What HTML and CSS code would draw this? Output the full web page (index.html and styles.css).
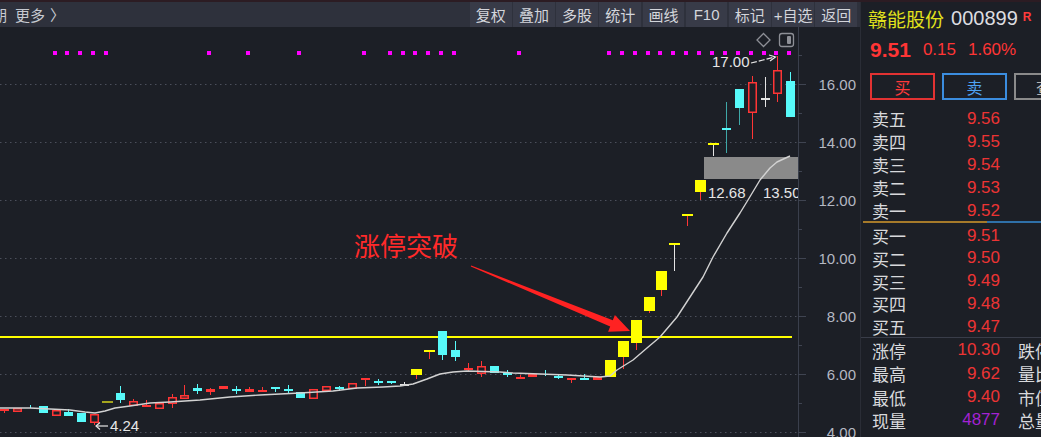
FILE: index.html
```html
<!DOCTYPE html>
<html lang="zh-CN">
<head>
<meta charset="utf-8">
<title>赣能股份 000899</title>
<link rel="stylesheet" href="styles.css">
</head>
<body>
<div class="app">
  <div class="main">
    <div class="toolbar">
      <div class="crumbs"><span class="cut">期</span><span>更多</span><span class="chev">〉</span></div>
      <div class="tools">
        <span class="tool">复权</span><span class="tool">叠加</span><span class="tool">多股</span><span class="tool">统计</span><span class="tool">画线</span><span class="tool">F10</span><span class="tool">标记</span><span class="tool">+自选</span><span class="tool">返回</span>
      </div>
    </div>
    <div class="chart">
      <svg class="plot" width="860" height="410" viewBox="0 27 860 410" xmlns="http://www.w3.org/2000/svg">
        <defs><clipPath id="pc"><rect x="0" y="27" width="798" height="410"/></clipPath></defs>
        <g class="grid">
          <line x1="0" x2="797" y1="84.5" y2="84.5"/>
          <line x1="0" x2="797" y1="142.5" y2="142.5"/>
          <line x1="0" x2="797" y1="200.5" y2="200.5"/>
          <line x1="0" x2="797" y1="258.5" y2="258.5"/>
          <line x1="0" x2="797" y1="316.5" y2="316.5"/>
          <line x1="0" x2="797" y1="374.5" y2="374.5"/>
          <line x1="0" x2="797" y1="432.5" y2="432.5"/>
        </g>
        <g class="axis">
          <line class="ax-line" x1="798.5" x2="798.5" y1="27" y2="437"/>
          <line class="tick" x1="798" x2="806" y1="84.5" y2="84.5"/>
          <line class="tick" x1="798" x2="806" y1="142.5" y2="142.5"/>
          <line class="tick" x1="798" x2="806" y1="200.5" y2="200.5"/>
          <line class="tick" x1="798" x2="806" y1="258.5" y2="258.5"/>
          <line class="tick" x1="798" x2="806" y1="316.5" y2="316.5"/>
          <line class="tick" x1="798" x2="806" y1="374.5" y2="374.5"/>
          <line class="tick" x1="798" x2="806" y1="432.5" y2="432.5"/>
          <line class="tick" x1="798" x2="802" y1="55.5" y2="55.5"/>
          <line class="tick" x1="798" x2="802" y1="113.5" y2="113.5"/>
          <line class="tick" x1="798" x2="802" y1="171.5" y2="171.5"/>
          <line class="tick" x1="798" x2="802" y1="229.5" y2="229.5"/>
          <line class="tick" x1="798" x2="802" y1="287.5" y2="287.5"/>
          <line class="tick" x1="798" x2="802" y1="345.5" y2="345.5"/>
          <line class="tick" x1="798" x2="802" y1="403.5" y2="403.5"/>
          <text class="ax-label" x="856" y="90">16.00</text>
          <text class="ax-label" x="856" y="148">14.00</text>
          <text class="ax-label" x="856" y="206">12.00</text>
          <text class="ax-label" x="856" y="264">10.00</text>
          <text class="ax-label" x="856" y="322">8.00</text>
          <text class="ax-label" x="856" y="380">6.00</text>
          <text class="ax-label" x="856" y="438">4.00</text>
        </g>
        <g class="icons">
          <path class="ic" d="M763.5 33.5 L770 40 L763.5 46.5 L757 40 Z"/>
          <rect class="ic" x="779.5" y="33.5" width="14" height="13" rx="2.5"/>
          <rect class="ic-fill" x="787" y="36" width="4" height="8" rx="1"/>
        </g>
        <g clip-path="url(#pc)">
          <g id="dots"></g>
          <rect class="zone" x="704" y="157" width="94" height="22"/>
          <rect class="limit-line" x="0" y="336" width="792" height="2"/>
          <g id="candles"></g>
          <polyline class="ma" points="0,408 30,408 50,409 70,410 85,412 95,413 105,411 115,408 130,406 150,403 170,402 200,400 230,397 260,395 300,393 333,391 357,388 383,387 400,386 413,384 427,379 440,374 453,372 467,371 500,372 513,373 567,375 600,377 610,376 617,370 633,360 647,348 660,337 677,317 690,297 703,277 713,257 727,233 740,213 748,200 760,180 770,168 777,162 790,156"/>
          <text class="mark" x="712" y="67">17.00</text>
          <line class="mark-arrow dashed" x1="751" y1="63" x2="775" y2="57"/>
          <polyline class="mark-arrow" points="769,55 775.5,57 770,61"/>
          <text class="mark" x="110" y="431">4.24</text>
          <line class="mark-arrow" x1="96" y1="426" x2="108" y2="426"/>
          <polyline class="mark-arrow" points="100,422.5 96,426 100,429.5"/>
          <text class="mark" x="708" y="198">12.68</text>
          <text class="mark" x="763" y="198">13.50</text>
          <text class="note" x="354" y="256">涨停突破</text>
          <polygon class="note-arrow" points="471.2,265.5 612.8,320.2 614.9,315.1 630,331 608.1,331.7 610.2,326.6 470.8,266.5"/>
        </g>
      </svg>
    </div>
  </div>
  <aside class="quote">
    <div class="q-head"><span class="q-name">赣能股份</span><span class="q-code">000899</span><span class="q-r">R</span></div>
    <div class="q-price"><span class="q-last">9.51</span><span>0.15</span><span>1.60%</span></div>
    <div class="q-btns"><span class="q-btn buy">买</span><span class="q-btn sell">卖</span><span class="q-btn more">查</span></div>
    <div class="book asks">
      <div class="row"><span class="lbl">卖五</span><span class="val">9.56</span></div>
      <div class="row"><span class="lbl">卖四</span><span class="val">9.55</span></div>
      <div class="row"><span class="lbl">卖三</span><span class="val">9.54</span></div>
      <div class="row"><span class="lbl">卖二</span><span class="val">9.53</span></div>
      <div class="row"><span class="lbl">卖一</span><span class="val">9.52</span></div>
    </div>
    <div class="split"></div>
    <div class="book bids">
      <div class="row"><span class="lbl">买一</span><span class="val">9.51</span></div>
      <div class="row"><span class="lbl">买二</span><span class="val">9.50</span></div>
      <div class="row"><span class="lbl">买三</span><span class="val">9.49</span></div>
      <div class="row"><span class="lbl">买四</span><span class="val">9.48</span></div>
      <div class="row"><span class="lbl">买五</span><span class="val">9.47</span></div>
    </div>
    <div class="book stats">
      <div class="row"><span class="lbl">涨停</span><span class="val">10.30</span><span class="lbl2">跌停</span></div>
      <div class="row"><span class="lbl">最高</span><span class="val">9.62</span><span class="lbl2">量比</span></div>
      <div class="row"><span class="lbl">最低</span><span class="val">9.40</span><span class="lbl2">市值</span></div>
      <div class="row"><span class="lbl">现量</span><span class="val vol">4877</span><span class="lbl2">总量</span></div>
    </div>
  </aside>
</div>
<script src="script.js"></script>
</body>
</html>
```

FILE: styles.css
```css
* { box-sizing: border-box; }
html, body { margin: 0; padding: 0; }
body {
  width: 1041px;
  height: 437px;
  overflow: hidden;
  background: #1c1f26;
  font-family: "Liberation Sans", "Noto Sans CJK SC", sans-serif;
}
.app {
  display: flex;
  height: 437px;
  border-top: 2px solid #2c1c23;
}
.main {
  width: 860px;
  flex: none;
  display: flex;
  flex-direction: column;
}
.toolbar {
  height: 25px;
  flex: none;
  background: #2e313c;
  display: flex;
  justify-content: space-between;
  align-items: stretch;
  overflow: hidden;
}
.crumbs {
  display: flex;
  align-items: center;
  gap: 8px;
  color: #c6c9d1;
  font-size: 15px;
  white-space: nowrap;
}
.crumbs .cut { margin-left: -8px; }
.crumbs .chev { margin-left: -3px; }
.tools {
  display: flex;
  gap: 1.6px;
  padding-right: 3px;
}
.tool {
  width: 41.6px;
  background: #383b48;
  color: #d3d5db;
  font-size: 15px;
  display: flex;
  align-items: center;
  justify-content: center;
  white-space: nowrap;
}
.chart { height: 410px; }
.plot { display: block; }
.grid line { stroke: #4b4f5b; stroke-width: 1; stroke-dasharray: 1.5 3.5; }
.ax-line { stroke: #3a3f4c; stroke-width: 1; }
.tick { stroke: #3f4451; stroke-width: 1; }
.ax-label { font: 15px "Liberation Sans", sans-serif; fill: #b4b8c3; text-anchor: end; }
.ic { fill: none; stroke: #8d8f96; stroke-width: 1.3; }
.ic-fill { fill: #8d8f96; }
.zone { fill: #8a8a8a; }
.limit-line { fill: #ffff00; }
.ma { fill: none; stroke: #d2d2d2; stroke-width: 1.4; stroke-linejoin: round; }
.mark { font: 15px "Liberation Sans", sans-serif; fill: #e6e6e6; }
.mark-arrow { fill: none; stroke: #e6e6e6; stroke-width: 1.2; }
.mark-arrow.dashed { stroke-dasharray: 6 2; }
.note { font: 26px "Noto Sans CJK SC", sans-serif; fill: #ff2a2a; }
.note-arrow { fill: #ff2222; }

.quote {
  width: 181px;
  flex: none;
  border-left: 1px solid #2a2d36;
  overflow: hidden;
  color: #d6d6d6;
}
.q-head {
  height: 33px;
  display: flex;
  align-items: center;
  gap: 7px;
  padding-left: 7px;
  white-space: nowrap;
}
.q-name { color: #e2e21c; font-size: 19px; }
.q-code { color: #dcdde0; font-size: 20px; }
.q-r {
  color: #ff3b3b;
  font-size: 12px;
  font-weight: bold;
  align-self: flex-start;
  margin-top: 8px;
  margin-left: -2px;
}
.q-price {
  height: 30px;
  display: flex;
  align-items: center;
  gap: 12px;
  padding-left: 9px;
  color: #ff3535;
  font-size: 17px;
  white-space: nowrap;
}
.q-last { font-size: 21px; font-weight: bold; }
.q-btns {
  margin-top: 8px;
  height: 27px;
  display: flex;
  gap: 7px;
  padding-left: 9px;
}
.q-btn {
  flex: none;
  width: 65px;
  border: 2px solid;
  display: flex;
  align-items: center;
  justify-content: center;
  font-size: 16px;
  font-family: "Noto Sans CJK SC", sans-serif;
}
.buy { border-color: #e23232; color: #ff3a3a; }
.sell { border-color: #3b8ddf; color: #4ea2f2; }
.more { border-color: #8a8a8a; color: #b4b4b4; justify-content: flex-start; padding-left: 20px; }
.asks { margin-top: 6px; }
.row {
  display: grid;
  grid-template-columns: 60px 68px auto;
  align-items: center;
  padding-left: 11px;
  white-space: nowrap;
}
.asks .row { height: 23px; }
.bids .row { height: 22.8px; }
.stats .row { height: 23.3px; }
.bids { border-bottom: 1px solid #393d49; }
.lbl, .lbl2 { font-size: 17px; color: #d8d9dc; font-family: "Noto Sans CJK SC", sans-serif; }
.lbl2 { margin-left: 18px; }
.val { font-size: 17px; color: #ec3434; text-align: right; }
.val.vol { color: #a322d2; }
.split {
  height: 2px;
  margin-left: 2px;
  background: linear-gradient(to right, #a67a2a 0, #a67a2a 124px, #2f70a8 124px, #2f70a8 100%);
}
```

FILE: script.js
```js
(function () {
  var NS = 'http://www.w3.org/2000/svg';
  var COL = { r: '#ff3535', c: '#57fafa', y: '#ffff00', w: '#e4e4e4', o: '#a5a51e', t: '#3fa8a8' };
  var BG = '#1c1f26';
  function X(i) { return Math.round(4 + 12.89 * i); }
  // [index, color, filled/hollow, bodyTop, bodyBottom, wickTop, wickBottom, wickColor, width]
  var data = [
    [0,'r','f',409,411,409,413],
    [1,'r','h',408,412],
    [2,'c','f',407,408,405,408,null,1],
    [3,'c','f',406,413],
    [4,'r','h',410,416],
    [5,'c','f',412,416,409],
    [6,'c','f',413,422],
    [7,'r','h',414,423,414,425],
    [8,'o','f',401,403,null,null,null,11],
    [9,'c','f',393,400,386,403],
    [10,'r','h',401,406,399],
    [11,'r','f',405,407,400],
    [12,'r','h',403,409],
    [13,'r','h',397,404,394,408],
    [14,'r','h',395,399,385],
    [15,'c','f',388,391,384,394],
    [16,'r','f',389,392,388,395],
    [17,'r','h',386,389],
    [18,'c','f',389,391,386,394],
    [19,'r','h',389,392,387],
    [20,'r','f',390,392,387],
    [21,'c','f',387,389,387,392],
    [22,'c','f',389,391,385,393],
    [23,'c','f',392,398],
    [24,'r','h',389,399],
    [25,'r','h',386,391],
    [26,'c','f',387,389,386,391],
    [27,'r','h',383,389],
    [28,'r','f',378,380,378,386],
    [29,'c','f',381,383,379,385],
    [30,'c','f',381,383,381,384],
    [31,'w','f',384,386,382,386],
    [32,'y','f',369,375,369,379,'r'],
    [33,'y','f',350,352,350,359,'r'],
    [34,'c','f',331,355,331,360],
    [35,'c','f',350,357,341,361],
    [36,'r','f',368,370,363,372],
    [37,'r','h',366,374,361,377],
    [38,'c','f',366,373],
    [39,'c','f',373,375,370,377],
    [40,'r','f',377,379,375],
    [41,'r','h',374,377],
    [42,'c','f',373,374,370,376,null,1],
    [43,'c','f',376,378,374,379],
    [44,'r','f',378,380,378,383],
    [45,'c','f',378,380,374],
    [46,'r','h',377,380],
    [47,'y','f',360,377],
    [48,'y','f',341,357,341,369,'r'],
    [49,'y','f',320,343,320,350,'r'],
    [50,'y','f',297,311,297,313,'r'],
    [51,'y','f',271,290,271,296,'r'],
    [52,'y','f',243,245,243,271,'w'],
    [53,'y','f',214,216,214,226,'r'],
    [54,'y','f',180,192,180,200,'r'],
    [55,'y','f',143,145,143,156,'w'],
    [56,'c','f',128,130,102,153,'t'],
    [57,'c','f',89,108,89,125,'t'],
    [58,'r','h',82,113,76,139],
    [59,'w','f',98,100,77,107],
    [60,'r','h',70,94,56,102],
    [61,'c','f',81,117,72]
  ];
  var g = document.getElementById('candles');
  function el(parent, name, attrs) {
    var e = document.createElementNS(NS, name);
    for (var k in attrs) e.setAttribute(k, attrs[k]);
    parent.appendChild(e);
    return e;
  }
  data.forEach(function (d) {
    var i = d[0], c = d[1], hollow = d[2] === 'h', bt = d[3], bb = d[4];
    var wt = d[5] != null ? d[5] : bt;
    var wb = d[6] != null ? d[6] : bb;
    var wc = COL[d[7] || c];
    var w = d[8] || (c === 'y' ? 11 : 9);
    var cx = X(i);
    if (wt < bt || wb > bb) {
      el(g, 'line', { x1: cx + 0.5, x2: cx + 0.5, y1: wt, y2: wb, stroke: wc, 'stroke-width': 1 });
    }
    if (hollow) {
      el(g, 'rect', { x: cx - 3.25, y: bt + 0.75, width: 7.5, height: Math.max(bb - bt - 1.5, 0.5), fill: BG, stroke: COL[c], 'stroke-width': 1.5 });
    } else {
      el(g, 'rect', { x: cx + 0.5 - w / 2, y: bt, width: w, height: Math.max(bb - bt, 1), fill: COL[c] });
    }
  });
  var dots = [4,5,6,7,8,16,19,23,28,30,31,32,33,34,35,40,47,48,49,50,51,52,53,54,55,56,57,58,59,60,61];
  var dg = document.getElementById('dots');
  dots.forEach(function (i) {
    el(dg, 'rect', { x: X(i) - 3, y: 51, width: 4, height: 4, fill: '#ff00ff' });
  });
})();
```
